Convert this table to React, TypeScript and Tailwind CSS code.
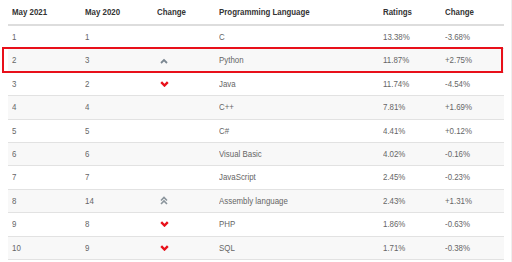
import React from 'react';

type Row = {
  now: string;
  prev: string;
  trend: 'up' | 'up2' | 'down' | null;
  lang: string;
  rating: string;
  change: string;
};

const rows: Row[] = [
  { now: '1', prev: '1', trend: null, lang: 'C', rating: '13.38%', change: '-3.68%' },
  { now: '2', prev: '3', trend: 'up', lang: 'Python', rating: '11.87%', change: '+2.75%' },
  { now: '3', prev: '2', trend: 'down', lang: 'Java', rating: '11.74%', change: '-4.54%' },
  { now: '4', prev: '4', trend: null, lang: 'C++', rating: '7.81%', change: '+1.69%' },
  { now: '5', prev: '5', trend: null, lang: 'C#', rating: '4.41%', change: '+0.12%' },
  { now: '6', prev: '6', trend: null, lang: 'Visual Basic', rating: '4.02%', change: '-0.16%' },
  { now: '7', prev: '7', trend: null, lang: 'JavaScript', rating: '2.45%', change: '-0.23%' },
  { now: '8', prev: '14', trend: 'up2', lang: 'Assembly language', rating: '2.43%', change: '+1.31%' },
  { now: '9', prev: '8', trend: 'down', lang: 'PHP', rating: '1.86%', change: '-0.63%' },
  { now: '10', prev: '9', trend: 'down', lang: 'SQL', rating: '1.71%', change: '-0.38%' },
];

const cols = 'grid grid-cols-[73px_72px_62px_164px_62px_63px]';

// the source text is a narrow, tall face: squeeze Arial-width text a bit
function Cell({ children }: { children?: React.ReactNode }) {
  return (
    <div className="pl-[4px] whitespace-nowrap">
      <span className="inline-block origin-left scale-x-[0.83]">{children}</span>
    </div>
  );
}

function Trend({ kind }: { kind: Row['trend'] }) {
  if (kind === 'up') {
    return (
      <svg width="8" height="6" viewBox="0 0 8 6" className="ml-[3px]">
        <polyline points="1,5 4,2 7,5" fill="none" stroke="#7b8791" strokeWidth="1.8" />
      </svg>
    );
  }
  if (kind === 'up2') {
    return (
      <svg width="8" height="9" viewBox="0 0 8 9" className="ml-[3px]">
        <polyline points="1,4.5 4,1.5 7,4.5" fill="none" stroke="#8a949c" strokeWidth="1.6" />
        <polyline points="1,8 4,5 7,8" fill="none" stroke="#8a949c" strokeWidth="1.6" />
      </svg>
    );
  }
  if (kind === 'down') {
    return (
      <svg width="9" height="6" viewBox="0 0 9 6" className="ml-[3px]">
        <polyline points="1.2,1.2 4.5,4.5 7.8,1.2" fill="none" stroke="#e8101a" strokeWidth="2.4" />
      </svg>
    );
  }
  return null;
}

export default function App() {
  return (
    <div className="relative w-[512px] h-[262px] bg-white overflow-hidden border-r border-[#eeeeee] font-['Liberation_Sans',Arial,sans-serif] text-[9.5px]">
      <div className="mx-[8px] w-[496px]">
        {/* header */}
        <div className={`${cols} h-[26px] items-center border-b-2 border-[#dddddd] font-bold text-[#333333]`}>
          <Cell>May 2021</Cell>
          <Cell>May 2020</Cell>
          <Cell>Change</Cell>
          <Cell>Programming Language</Cell>
          <Cell>Ratings</Cell>
          <Cell>Change</Cell>
        </div>

        {rows.map((r, i) => (
          <div
            key={r.now}
            className={`${cols} h-[23.4px] items-center border-b border-[#e2e2e2] text-[#666666] ${
              i % 2 === 1 ? 'bg-[#f8f8f8]' : 'bg-white'
            }`}
          >
            <Cell>{r.now}</Cell>
            <Cell>{r.prev}</Cell>
            <div className="pl-[4px] flex items-center">
              <Trend kind={r.trend} />
            </div>
            <Cell>{r.lang}</Cell>
            <Cell>{r.rating}</Cell>
            <Cell>{r.change}</Cell>
          </div>
        ))}
      </div>

      {/* highlight box on Python row */}
      <div className="absolute left-[2px] top-[47px] w-[501px] h-[26px] border-2 border-[#e8101a] pointer-events-none" />
    </div>
  );
}
